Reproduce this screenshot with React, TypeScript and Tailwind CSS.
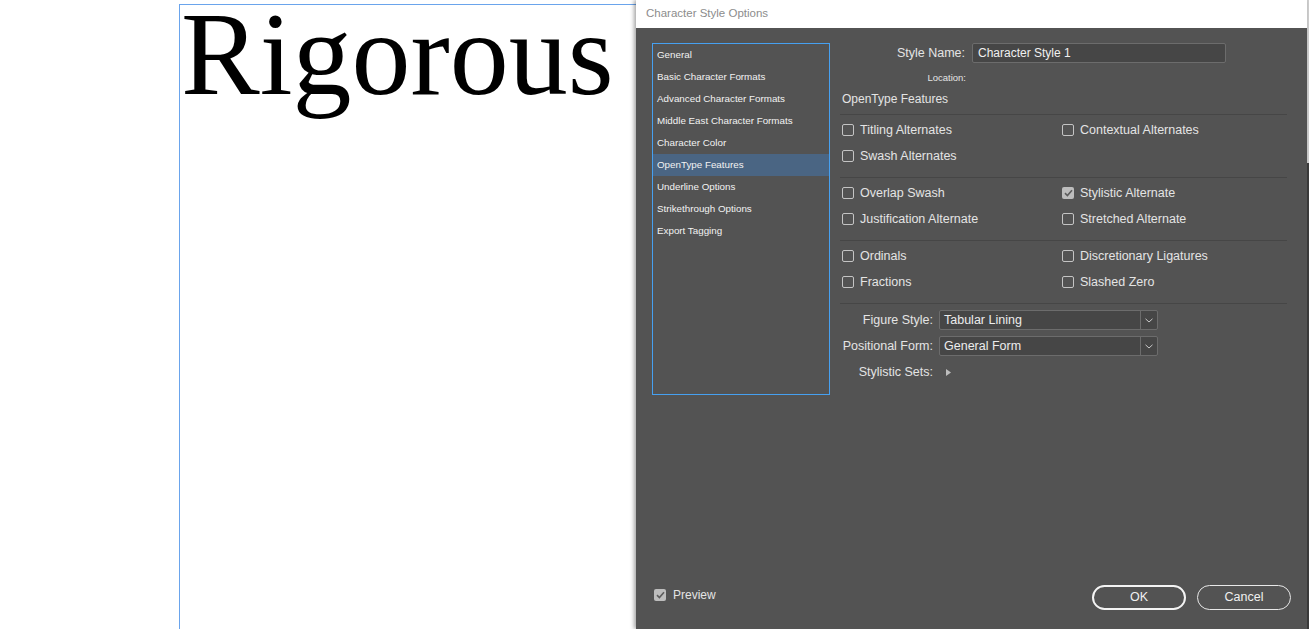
import React from "react";

const sans = { fontFamily: '"Liberation Sans", Arial, sans-serif' };

const menu = [
  "General",
  "Basic Character Formats",
  "Advanced Character Formats",
  "Middle East Character Formats",
  "Character Color",
  "OpenType Features",
  "Underline Options",
  "Strikethrough Options",
  "Export Tagging",
];

const groups: [string, boolean][][] = [
  [
    ["Titling Alternates", false],
    ["Contextual Alternates", false],
    ["Swash Alternates", false],
  ],
  [
    ["Overlap Swash", false],
    ["Stylistic Alternate", true],
    ["Justification Alternate", false],
    ["Stretched Alternate", false],
  ],
  [
    ["Ordinals", false],
    ["Discretionary Ligatures", false],
    ["Fractions", false],
    ["Slashed Zero", false],
  ],
];

const Check = ({ checked }: { checked?: boolean }) =>
  checked ? (
    <span className="w-[12px] h-[12px] rounded-[2px] bg-[#bdbdbd] flex items-center justify-center flex-shrink-0">
      <svg width="9" height="8" viewBox="0 0 9 8">
        <path d="M1 4.2 L3.4 6.5 L8 1.2" fill="none" stroke="#5c5c5c" strokeWidth="1.6" />
      </svg>
    </span>
  ) : (
    <span className="w-[12px] h-[12px] rounded-[2px] border border-[#c4c4c4] flex-shrink-0" />
  );

const CheckRow = ({ label, checked }: { label: string; checked: boolean }) => (
  <div className="h-[26px] flex items-center gap-[6px] text-[12.5px] text-[#e4e4e4]">
    <Check checked={checked} />
    <span>{label}</span>
  </div>
);

const Dropdown = ({ label, value }: { label: string; value: string }) => (
  <div className="h-[20px] flex items-center mt-[6px]">
    <span className="w-[93px] text-right text-[12.5px] text-[#e4e4e4] whitespace-nowrap">{label}</span>
    <div className="ml-[6px] w-[219px] h-[20px] flex border border-[#6c6c6c] rounded-[2px] bg-[#464646]">
      <span className="flex-1 pl-[4px] text-[12.5px] leading-[18px] text-[#ececec]">{value}</span>
      <span className="w-[17px] border-l border-[#6c6c6c] flex items-center justify-center">
        <svg width="8" height="5" viewBox="0 0 8 5">
          <path d="M0.5 0.8 L4 4 L7.5 0.8" fill="none" stroke="#c8c8c8" strokeWidth="1" />
        </svg>
      </span>
    </div>
  </div>
);

export default function App() {
  return (
    <div className="w-[1309px] h-[629px] flex bg-white overflow-hidden" style={sans}>
      {/* document canvas */}
      <div className="w-[636px] h-full pl-[179px] pt-[4px]">
        <div className="h-full border-l border-t border-[#6aa4ec]">
          <div
            className="text-[118px] leading-[0.8] text-black mt-[3px] pl-[1px] whitespace-nowrap"
            style={{ fontFamily: '"Liberation Serif", "Times New Roman", serif' }}
          >
            Rigorous
          </div>
        </div>
      </div>

      {/* dialog */}
      <div className="w-[671px] h-full flex flex-col shadow-[-2px_0_4px_rgba(0,0,0,0.35)] z-10">
        <div className="h-[28px] bg-white flex items-center pl-[10px] text-[11.5px] text-[#8c8c8c]">
          Character Style Options
        </div>
        <div className="flex-1 bg-[#535353] flex flex-col">
          <div className="flex pt-[15px] pl-[16px]">
            <div className="w-[178px] h-[352px] border border-[#46a0f0] flex flex-col">
              {menu.map((m) => (
                <div
                  key={m}
                  className={`h-[22px] flex items-center pl-[4px] text-[9.8px] text-[#f2f2f2] ${
                    m === "OpenType Features" ? "bg-[#4a6583]" : ""
                  }`}
                >
                  {m}
                </div>
              ))}
            </div>

            <div className="ml-[10px] w-[447px] flex flex-col">
              <div className="h-[20px] flex items-center">
                <span className="w-[125px] text-right text-[12.5px] text-[#e4e4e4]">Style Name:</span>
                <div className="ml-[7px] w-[254px] h-[20px] border border-[#6c6c6c] rounded-[2px] bg-[#464646] pl-[5px] text-[12px] leading-[18px] text-[#f0f0f0]">
                  Character Style 1
                </div>
              </div>
              <div className="mt-[8px] h-[14px] flex items-center">
                <span className="w-[126px] text-right text-[9.5px] text-[#e4e4e4]">Location:</span>
              </div>
              <div className="mt-[5px] h-[18px] flex items-center pl-[2px] text-[12px] text-[#e4e4e4]">
                OpenType Features
              </div>
              <div className="mt-[6px] h-px bg-[#464646]" />

              {groups.map((g, i) => (
                <div key={i} className="pt-[2px] pb-[8px] pl-[2px] border-b border-[#464646] grid grid-cols-[220px_1fr]">
                  {g.map(([label, checked]) => (
                    <CheckRow key={label} label={label} checked={checked} />
                  ))}
                </div>
              ))}

              <Dropdown label="Figure Style:" value="Tabular Lining" />
              <Dropdown label="Positional Form:" value="General Form" />
              <div className="h-[20px] flex items-center mt-[6px]">
                <span className="w-[93px] text-right text-[12.5px] text-[#e4e4e4]">Stylistic Sets:</span>
                <svg className="ml-[13px]" width="5" height="7" viewBox="0 0 5 7">
                  <path d="M0 0 L5 3.5 L0 7 Z" fill="#bdbdbd" />
                </svg>
              </div>
            </div>
          </div>

          <div className="mt-auto flex items-center justify-between pl-[18px] pr-[16px] pb-[19px]">
            <div className="flex items-center gap-[7px] mb-[5px] text-[12px] text-[#e4e4e4]">
              <Check checked />
              <span>Preview</span>
            </div>
            <div className="flex gap-[11px]">
              <button className="w-[94px] h-[25px] rounded-full border-2 border-[#f4f4f4] text-[12.5px] text-[#f0f0f0]">
                OK
              </button>
              <button className="w-[94px] h-[25px] rounded-full border border-[#e8e8e8] text-[12.5px] text-[#f0f0f0]">
                Cancel
              </button>
            </div>
          </div>
        </div>
      </div>

      <div className="w-[2px] h-full flex flex-col">
        <div className="h-[163px] bg-[#cfcfcf]" />
        <div className="flex-1 bg-[#3c3c3c]" />
      </div>
    </div>
  );
}
